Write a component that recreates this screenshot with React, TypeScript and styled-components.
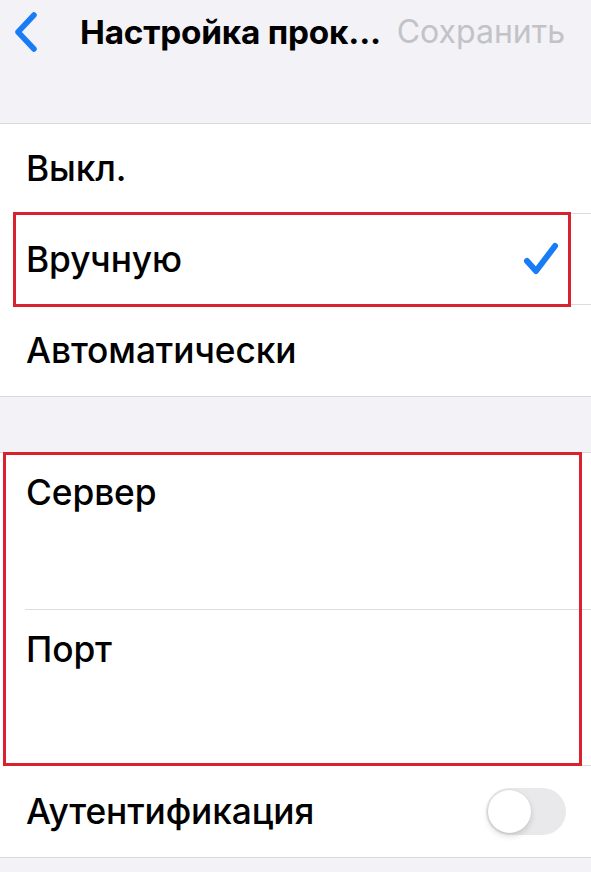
import React from "react";
import styled, { createGlobalStyle } from "styled-components";

const Global = createGlobalStyle`
  html, body { margin: 0; padding: 0; background: #f2f2f7; }
  body { font-family: Inter, "Noto Sans", "Liberation Sans", sans-serif; -webkit-font-smoothing: antialiased; }
`;

const Page = styled.div`
  width: 591px;
  min-height: 872px;
  background: #f2f2f7;
  overflow: hidden;
`;

const NavBar = styled.div`
  height: 123px;
  display: flex;
  align-items: flex-start;
  padding-top: 11px;
  box-sizing: border-box;
`;

const BackButton = styled.div`
  width: 80px;
  height: 42px;
  display: flex;
  align-items: center;
  padding-left: 14px;
  box-sizing: border-box;
`;

const Title = styled.div`
  font-size: 33.3px;
  font-weight: 700;
  color: #000;
  letter-spacing: -0.2px;
  line-height: 42px;
  white-space: nowrap;
`;

const SaveButton = styled.div`
  margin-left: auto;
  margin-right: 26px;
  font-size: 32px;
  font-weight: 400;
  color: #c3c3c7;
  line-height: 42px;
`;

const Section = styled.div<{ $gap?: number }>`
  background: #fff;
  border-top: 1px solid #d9d9de;
  border-bottom: 1px solid #d9d9de;
  margin-top: ${(p) => p.$gap ?? 0}px;
`;

const Row = styled.div<{ $h: number; $align?: string; $pt?: number }>`
  position: relative;
  height: ${(p) => p.$h}px;
  display: flex;
  align-items: ${(p) => p.$align ?? "center"};
  padding: ${(p) => p.$pt ?? 0}px 26px 0 26px;
  box-sizing: border-box;
`;

const Separator = styled.div`
  height: 1px;
  margin-left: 25px;
  background: #dcdce0;
`;

const Label = styled.span`
  font-size: 35.3px;
  font-weight: 500;
  color: #000;
  letter-spacing: -0.1px;
`;

const Trailing = styled.div<{ $mr?: number }>`
  margin-left: auto;
  margin-right: ${(p) => p.$mr ?? 0}px;
  display: flex;
  align-items: center;
`;

const Highlight = styled.div<{ $l: number; $t: number; $r: number; $b: number }>`
  position: absolute;
  left: ${(p) => p.$l}px;
  top: ${(p) => p.$t}px;
  right: ${(p) => p.$r}px;
  bottom: ${(p) => p.$b}px;
  border: 3px solid #d8232f;
  pointer-events: none;
  z-index: 2;
`;

const Group = styled.div`
  position: relative;
`;

const Track = styled.div`
  width: 80px;
  height: 47px;
  border-radius: 24px;
  background: #e9e9eb;
  position: relative;
  margin-right: -1px;
`;

const Knob = styled.div`
  position: absolute;
  left: 2px;
  top: 2px;
  width: 43px;
  height: 43px;
  border-radius: 50%;
  background: #fff;
  box-shadow: 0 3px 6px rgba(0, 0, 0, 0.15), 0 0 0 0.5px rgba(0, 0, 0, 0.06);
`;

const Chevron = () => (
  <svg width="24" height="40" viewBox="0 0 24 40">
    <path d="M20 3 L4 20 L20 37" fill="none" stroke="#1a7cf5" strokeWidth="5.5" strokeLinecap="round" strokeLinejoin="round" />
  </svg>
);

const Check = () => (
  <svg width="36" height="34" viewBox="0 0 36 34">
    <path d="M4 19 L13 29 L32 4" fill="none" stroke="#1a7cf5" strokeWidth="6" strokeLinecap="round" strokeLinejoin="round" />
  </svg>
);

export default function App() {
  return (
    <Page>
      <Global />
      <NavBar>
        <BackButton>
          <Chevron />
        </BackButton>
        <Title>Настройка прок...</Title>
        <SaveButton>Сохранить</SaveButton>
      </NavBar>

      <Section>
        <Row $h={89}>
          <Label>Выкл.</Label>
        </Row>
        <Separator />
        <Row $h={90}>
          <Highlight $l={13} $t={-2} $r={20} $b={-3} />
          <Label>Вручную</Label>
          <Trailing $mr={6}>
            <Check />
          </Trailing>
        </Row>
        <Separator />
        <Row $h={91}>
          <Label>Автоматически</Label>
        </Row>
      </Section>

      <Section $gap={55}>
        <Group>
          <Highlight $l={3} $t={-1} $r={9} $b={-1} />
          <Row $h={156} $align="flex-start" $pt={18}>
            <Label>Сервер</Label>
          </Row>
          <Separator />
          <Row $h={155} $align="flex-start" $pt={18}>
            <Label>Порт</Label>
          </Row>
        </Group>
        <Separator />
        <Row $h={91}>
          <Label>Аутентификация</Label>
          <Trailing>
            <Track>
              <Knob />
            </Track>
          </Trailing>
        </Row>
      </Section>
    </Page>
  );
}
